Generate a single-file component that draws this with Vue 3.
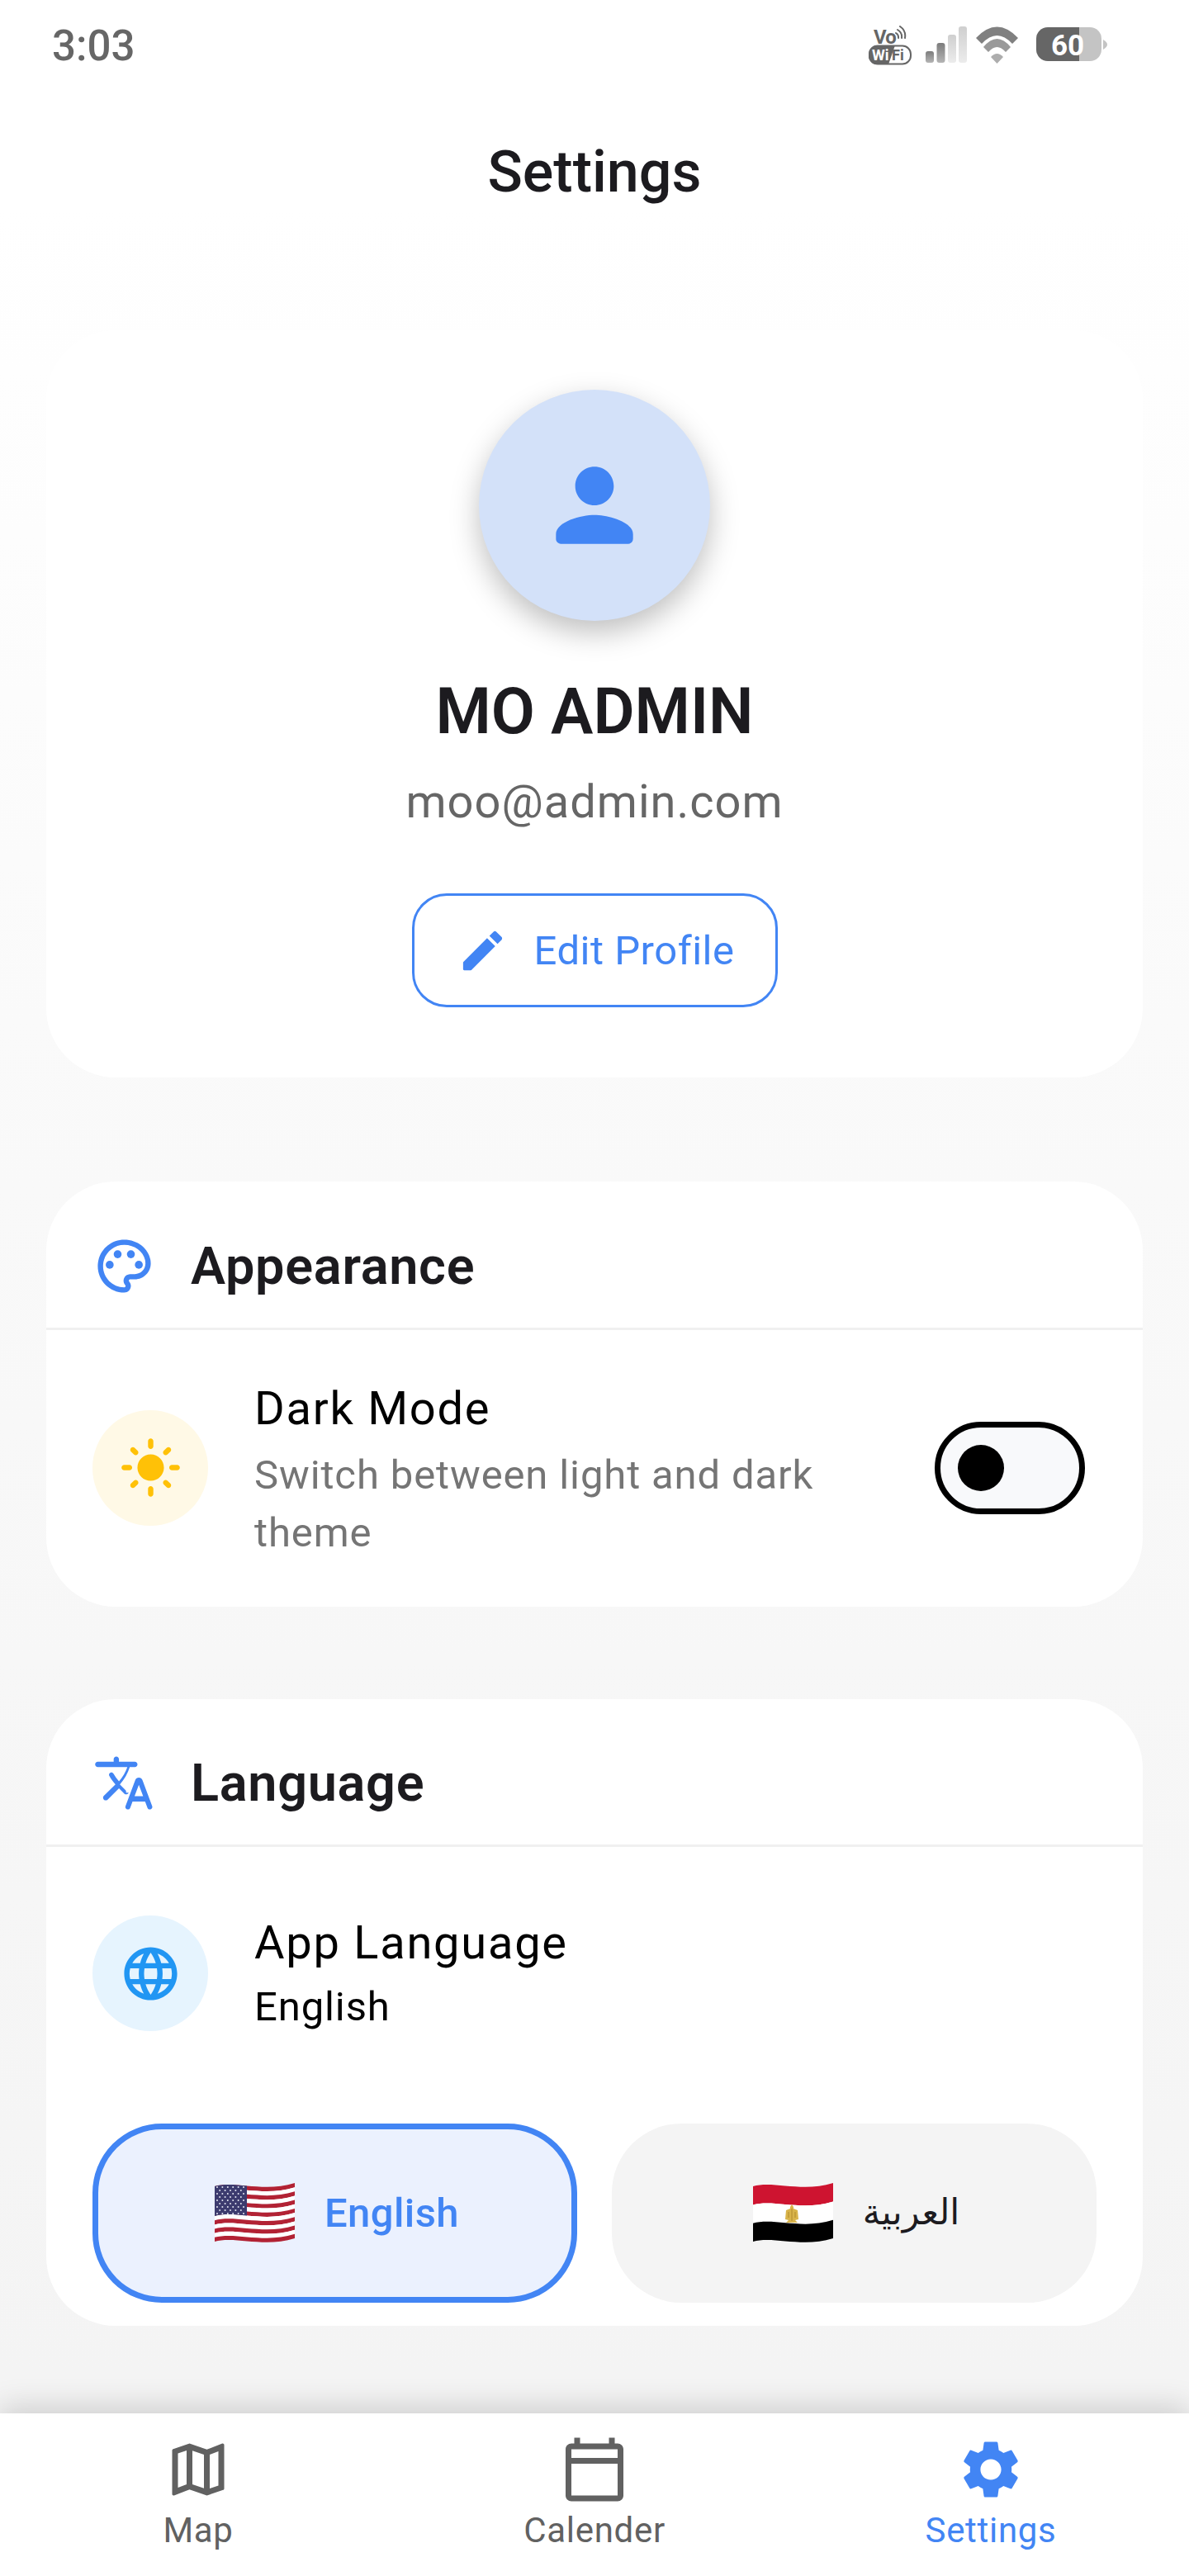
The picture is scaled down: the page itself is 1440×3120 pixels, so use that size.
<script setup>
// wavy band used by both flags, top edge y0 and bottom edge y1
const band = (y0, y1) =>
  `M0 ${y0 + 4}C25 ${y0 - 3} 60 ${y0 + 12} 97 ${y0}V${y1}C60 ${y1 + 12} 25 ${y1 - 3} 0 ${y1 + 4}Z`;

const stripeH = 67 / 13;
const usStripes = Array.from({ length: 13 }, (_, i) => ({
  d: band(i * stripeH, (i + 1) * stripeH),
  fill: i % 2 === 0 ? "#b22234" : "#ffffff",
}));

const stars = [];
for (let r = 0; r < 9; r++) {
  const n = r % 2 === 0 ? 6 : 5;
  for (let c = 0; c < n; c++) {
    stars.push({ x: (r % 2 === 0 ? 3 : 6.2) + c * 6.4, y: 5 + r * 4 });
  }
}

const egStripes = [
  { d: band(0, 22.4), fill: "#ce1430" },
  { d: band(22.4, 44.8), fill: "#ffffff" },
  { d: band(44.8, 67), fill: "#000000" },
];
const usCanton = band(0, 36);
</script>

<template>
  <div class="page">
    <!-- status bar -->
    <div class="status">
      <span class="time">3:03</span>
      <div class="status-icons">
        <svg class="vowifi" width="52" height="48" viewBox="0 0 52 48">
          <text x="6" y="22" class="vo">Vo</text>
          <path d="M33 9a6 6 0 0 1 3 6M35 5a10 10 0 0 1 5 10M38 1a14 14 0 0 1 6 14" fill="none" stroke="#666" stroke-width="2" stroke-linecap="round" />
          <rect x="1" y="24.5" width="50" height="22" rx="10" fill="#fff" stroke="#666" stroke-width="2" />
          <path d="M10 24H32L24 47H10A10 10 0 0 1 0 36V34A10 10 0 0 1 10 24Z" fill="#666" />
          <text x="4" y="42" class="wi">Wi</text>
          <text x="28" y="42" class="fi">Fi</text>
        </svg>
        <svg width="50" height="48" viewBox="0 0 50 48">
          <defs>
            <linearGradient id="barDark" x1="0" y1="0" x2="0" y2="1">
              <stop offset="0" stop-color="#7c7c7c" />
              <stop offset="1" stop-color="#b4b4b4" />
            </linearGradient>
            <linearGradient id="barLight" x1="0" y1="0" x2="0" y2="1">
              <stop offset="0" stop-color="#cfcfcf" />
              <stop offset="1" stop-color="#ececec" />
            </linearGradient>
          </defs>
          <rect x="0" y="31" width="10" height="14" rx="3" fill="url(#barDark)" />
          <rect x="13.500" y="21" width="10" height="24" rx="3" fill="url(#barDark)" />
          <rect x="27" y="11" width="10" height="34" rx="3" fill="url(#barLight)" />
          <rect x="40" y="1" width="10" height="44" rx="3" fill="url(#barLight)" />
        </svg>
        <svg width="51" height="48" viewBox="0 0 51 48">
          <path d="M0 15Q25.500 -12 51 15L44 22Q25.500 2 7 22Z" fill="#808080" />
          <path d="M9 26Q25.500 6 42 26L36 32Q25.500 20 15 32Z" fill="#999" />
          <path d="M18 38Q25.500 30 33 38L25.500 46Z" fill="#adadad" />
        </svg>
        <svg width="86" height="48" viewBox="0 0 86 48">
          <path d="M14 2H52V43H14A14 14 0 0 1 0 29V16A14 14 0 0 1 14 2Z" fill="#666" />
          <path d="M52 2H65A14 14 0 0 1 79 16V29A14 14 0 0 1 65 43H52Z" fill="#c4c4c4" />
          <path d="M81 17Q86 20 86 23Q86 26 81 29Z" fill="#c4c4c4" />
          <text x="18" y="36" class="batt">60</text>
        </svg>
      </div>
    </div>

    <div class="appbar">Settings</div>

    <div class="content">
      <!-- profile -->
      <section class="card profile">
        <div class="avatar">
          <svg width="140" height="140" viewBox="0 0 24 24" fill="#4285f4">
            <path d="M12 12c2.210 0 4-1.790 4-4s-1.790-4-4-4-4 1.790-4 4 1.790 4 4 4zm0 2c-2.670 0-8 1.340-8 4v1c0 .55.45 1 1 1h14c.55 0 1-.45 1-1v-1c0-2.660-5.330-4-8-4z" />
          </svg>
        </div>
        <div class="name">MO ADMIN</div>
        <div class="email">moo@admin.com</div>
        <button class="edit-btn">
          <svg width="63" height="63" viewBox="0 0 24 24" fill="#4285f4">
            <path d="M3 17.460v3.040c0 .28.22.5.5.5h3.040c.13 0 .26-.05.35-.15L17.810 9.940l-3.750-3.750L3.150 17.100c-.1.1-.15.22-.15.36zM20.710 7.040c.39-.39.39-1.020 0-1.410l-2.340-2.340c-.39-.39-1.020-.39-1.410 0l-1.830 1.830 3.750 3.750 1.830-1.830z" />
          </svg>
          <span>Edit Profile</span>
        </button>
      </section>

      <!-- appearance -->
      <section class="card appearance">
        <div class="card-head">
          <svg width="77" height="77" viewBox="0 0 24 24" fill="#4285f4">
            <path d="M12 22C6.490 22 2 17.510 2 12S6.490 2 12 2s10 4.040 10 9c0 3.310-2.690 6-6 6h-1.770c-.28 0-.5.22-.5.5 0 .12.05.23.13.33.41.47.64 1.060.64 1.670 0 1.380-1.120 2.500-2.500 2.500zm0-18c-4.410 0-8 3.590-8 8s3.590 8 8 8c.28 0 .5-.22.5-.5 0-.16-.08-.28-.14-.35-.41-.46-.63-1.050-.63-1.650 0-1.380 1.120-2.500 2.500-2.500H16c2.210 0 4-1.790 4-4 0-3.860-3.590-7-8-7z" />
            <circle cx="6.500" cy="11.500" r="1.500" />
            <circle cx="9.500" cy="7.500" r="1.500" />
            <circle cx="14.500" cy="7.500" r="1.500" />
            <circle cx="17.500" cy="11.500" r="1.500" />
          </svg>
          <h2>Appearance</h2>
        </div>
        <div class="row dark-row">
          <div class="round-icon sun">
            <svg width="77" height="77" viewBox="0 0 24 24" fill="#ffc107">
              <path d="M12 7c-2.760 0-5 2.240-5 5s2.240 5 5 5 5-2.240 5-5-2.240-5-5-5zM2 13h2c.55 0 1-.45 1-1s-.45-1-1-1H2c-.55 0-1 .45-1 1s.45 1 1 1zm18 0h2c.55 0 1-.45 1-1s-.45-1-1-1h-2c-.55 0-1 .45-1 1s.45 1 1 1zM11 2v2c0 .55.45 1 1 1s1-.45 1-1V2c0-.55-.45-1-1-1s-1 .45-1 1zm0 18v2c0 .55.45 1 1 1s1-.45 1-1v-2c0-.55-.45-1-1-1s-1 .45-1 1zM5.990 4.580c-.39-.39-1.030-.39-1.410 0-.39.39-.39 1.030 0 1.410l1.060 1.060c.39.39 1.030.39 1.410 0s.39-1.030 0-1.410L5.990 4.580zm12.370 12.370c-.39-.39-1.030-.39-1.410 0-.39.39-.39 1.030 0 1.410l1.060 1.060c.39.39 1.030.39 1.410 0 .39-.39.39-1.030 0-1.410l-1.060-1.060zm1.060-10.960c.39-.39.39-1.030 0-1.410-.39-.39-1.030-.39-1.410 0l-1.060 1.060c-.39.39-.39 1.030 0 1.410s1.030.39 1.410 0l1.060-1.060zM7.050 18.360c.39-.39.39-1.030 0-1.410-.39-.39-1.030-.39-1.410 0l-1.060 1.060c-.39.39-.39 1.030 0 1.410s1.030.39 1.410 0l1.060-1.060z" />
            </svg>
          </div>
          <div class="row-text">
            <div class="row-title">Dark Mode</div>
            <div class="row-sub">Switch between light and dark theme</div>
          </div>
          <div class="switch"><span class="thumb"></span></div>
        </div>
      </section>

      <!-- language -->
      <section class="card language">
        <div class="card-head">
          <svg width="77" height="77" viewBox="0 0 24 24" fill="#4285f4">
            <path d="M12.650 15.670c.14-.36.05-.77-.23-1.050l-2.090-2.060.03-.03c1.740-1.940 2.980-4.170 3.710-6.530H16c.54 0 .99-.45.99-.99v-.02c0-.54-.45-.99-.99-.99h-6V3c0-.55-.45-1-1-1s-1 .45-1 1v1H2c-.55 0-1 .45-1 1s.45 1 1 1h11.170C12.500 7.920 11.440 9.750 10 11.350c-.81-.89-1.490-1.860-2.060-2.880-.16-.29-.45-.47-.78-.47-.69 0-1.130.75-.79 1.350.63 1.130 1.400 2.210 2.300 3.210L4.300 16.870c-.4.39-.4 1.030 0 1.420.39.39 1.020.39 1.420 0L10 14l2.020 2.020c.51.51 1.380.32 1.630-.35zM17.500 10c-.6 0-1.140.37-1.350.94l-3.670 9.800c-.24.61.22 1.260.87 1.260.39 0 .74-.24.88-.61l.89-2.390h4.750l.9 2.390c.14.36.49.61.88.61.65 0 1.110-.65.88-1.260l-3.670-9.800c-.22-.57-.76-.94-1.360-.94zm-1.620 7l1.620-4.330L19.120 17h-3.240z" />
          </svg>
          <h2>Language</h2>
        </div>
        <div class="row lang-row">
          <div class="round-icon globe">
            <svg width="77" height="77" viewBox="0 0 24 24" fill="#2196f3">
              <path d="M11.990 2C6.470 2 2 6.480 2 12s4.470 10 9.990 10C17.520 22 22 17.520 22 12S17.520 2 11.990 2zm6.930 6h-2.950c-.32-1.250-.78-2.450-1.380-3.560 1.840.63 3.370 1.910 4.330 3.560zM12 4.040c.83 1.200 1.480 2.530 1.910 3.960h-3.820c.43-1.430 1.080-2.760 1.910-3.960zM4.260 14C4.100 13.360 4 12.690 4 12s.1-1.360.26-2h3.380c-.08.66-.14 1.320-.14 2 0 .68.06 1.340.14 2H4.260zm.82 2h2.950c.32 1.250.78 2.450 1.380 3.560-1.840-.63-3.370-1.900-4.330-3.560zm2.950-8H5.080c.96-1.660 2.490-2.930 4.330-3.560C8.810 5.550 8.350 6.750 8.030 8zM12 19.960c-.83-1.200-1.480-2.530-1.910-3.960h3.820c-.43 1.430-1.080 2.760-1.910 3.960zM14.340 14H9.660c-.09-.66-.16-1.320-.16-2 0-.68.07-1.350.16-2h4.680c.09.65.16 1.320.16 2 0 .68-.07 1.340-.16 2zm.25 5.560c.6-1.110 1.060-2.310 1.380-3.560h2.950c-.96 1.650-2.490 2.930-4.330 3.560zM16.360 14c.08-.66.14-1.320.14-2 0-.68-.06-1.340-.14-2h3.380c.16.64.26 1.310.26 2s-.1 1.360-.26 2h-3.380z" />
            </svg>
          </div>
          <div class="row-text">
            <div class="row-title">App Language</div>
            <div class="row-value">English</div>
          </div>
        </div>
        <div class="lang-buttons">
          <button class="lang-btn active">
            <svg class="flag" width="97" height="73" viewBox="0 0 97 73">
              <defs>
                <clipPath id="cantonClip"><rect x="0" y="-4" width="39" height="60" /></clipPath>
              </defs>
              <path v-for="(s, i) in usStripes" :key="i" :d="s.d" :fill="s.fill" />
              <g clip-path="url(#cantonClip)">
                <path :d="usCanton" fill="#3c3b6e" />
                <circle v-for="(st, i) in stars" :key="i" :cx="st.x" :cy="st.y" r="1" fill="#e4e6f2" />
              </g>
            </svg>
            <span>English</span>
          </button>
          <button class="lang-btn">
            <svg class="flag" width="97" height="73" viewBox="0 0 97 73">
              <path v-for="(s, i) in egStripes" :key="i" :d="s.d" :fill="s.fill" />
              <path d="M47 26L49 29V31L54 33L55 44L51 45L54 48H40L43 45L39 44L40 33L45 31V29Z" fill="#d9b44a" />
              <path d="M47 31V46M43 35V42M51 35V42" stroke="#b08a2c" stroke-width="1" fill="none" />
            </svg>
            <span class="arabic">العربية</span>
          </button>
        </div>
      </section>
    </div>

    <!-- bottom navigation -->
    <nav class="bottom-nav">
      <div class="nav-item">
        <svg width="84" height="84" viewBox="0 0 24 24" fill="#616161">
          <path d="M20.500 3l-.16.03L15 5.100 9 3 3.360 4.900c-.21.07-.36.25-.36.48V20.500c0 .28.22.5.5.5l.16-.03L9 18.900l6 2.100 5.640-1.900c.21-.07.36-.25.36-.48V3.500c0-.28-.22-.5-.5-.5zM10 5.470l4 1.400v11.660l-4-1.400V5.470zm-5 .99l3-1.010v11.700l-3 1.160V6.460zm14 11.080l-3 1.010V6.860l3-1.160v11.840z" />
        </svg>
        <span>Map</span>
      </div>
      <div class="nav-item">
        <svg width="84" height="84" viewBox="0 0 24 24" fill="#616161">
          <path d="M20 3h-1V1h-2v2H7V1H5v2H4c-1.100 0-2 .9-2 2v16c0 1.100.9 2 2 2h16c1.100 0 2-.9 2-2V5c0-1.100-.9-2-2-2zm0 2v3H4V5h16zM4 21V10h16v11H4z" />
        </svg>
        <span>Calender</span>
      </div>
      <div class="nav-item current">
        <svg width="84" height="84" viewBox="0 0 24 24" fill="#4285f4">
          <path d="M19.140 12.940c.04-.3.06-.61.06-.94 0-.32-.02-.64-.07-.94l2.030-1.580c.18-.14.23-.41.12-.61l-1.920-3.320c-.12-.22-.37-.29-.59-.22l-2.390.96c-.5-.38-1.030-.7-1.620-.94l-.36-2.540c-.04-.24-.24-.41-.48-.41h-3.840c-.24 0-.43.17-.47.41l-.36 2.540c-.59.24-1.130.57-1.620.94l-2.390-.96c-.22-.08-.47 0-.59.22L2.740 8.870c-.12.21-.08.47.12.61l2.030 1.580c-.05.3-.09.63-.09.94s.02.64.07.94l-2.030 1.580c-.18.14-.23.41-.12.61l1.920 3.320c.12.22.37.29.59.22l2.390-.96c.5.38 1.030.7 1.620.94l.36 2.540c.05.24.24.41.48.41h3.840c.24 0 .44-.17.47-.41l.36-2.540c.59-.24 1.130-.56 1.620-.94l2.390.96c.22.08.47 0 .59-.22l1.920-3.320c.12-.22.07-.47-.12-.61l-2.010-1.580zM12 15.600c-1.980 0-3.600-1.620-3.600-3.600s1.620-3.600 3.600-3.600 3.600 1.620 3.600 3.600-1.620 3.600-3.600 3.600z" />
        </svg>
        <span>Settings</span>
      </div>
    </nav>
  </div>
</template>

<style scoped>
.page {
  width: 1440px;
  height: 3120px;
  overflow: hidden;
  display: flex;
  flex-direction: column;
  font-family: "Roboto", sans-serif;
  background: linear-gradient(#ffffff 8%, #f9f9f9 46%, #f4f4f4 92%);
}

/* status bar */
.status {
  height: 112px;
  padding: 0 99px 2px 63px;
  box-sizing: border-box;
  display: flex;
  align-items: center;
  justify-content: space-between;
  flex-shrink: 0;
}
.time {
  font-size: 51px;
  font-weight: 500;
  color: #666;
}
.status-icons {
  display: flex;
  align-items: center;
}
.status-icons svg {
  display: block;
}
.status-icons svg:nth-child(1) { margin-right: 17px; }
.status-icons svg:nth-child(2) { margin-right: 11px; }
.status-icons svg:nth-child(3) { margin-right: 22px; }
.vo {
  font-size: 24px;
  font-weight: 700;
  letter-spacing: -1px;
  fill: #666;
}
.wi,
.fi {
  font-size: 18px;
  font-weight: 700;
}
.wi { fill: #fff; }
.fi { fill: #666; }
.batt {
  font-size: 35px;
  font-weight: 700;
  fill: #fff;
}

.appbar {
  height: 192px;
  flex-shrink: 0;
  display: flex;
  align-items: center;
  justify-content: center;
  font-size: 70px;
  font-weight: 500;
  color: #1c1b1f;
}

.content {
  flex: 1;
  padding: 96px 56px 0;
  display: flex;
  flex-direction: column;
}

.card {
  background: #fff;
  border-radius: 84px;
}

/* profile */
.profile {
  padding: 72px 0 85px;
  display: flex;
  flex-direction: column;
  align-items: center;
}
.avatar {
  width: 280px;
  height: 280px;
  border-radius: 50%;
  background: #d3e1f9;
  box-shadow: 0 14px 35px rgba(0, 0, 0, 0.25);
  display: flex;
  align-items: center;
  justify-content: center;
}
.name {
  margin-top: 55px;
  font-size: 77px;
  line-height: 110px;
  font-weight: 600;
  color: #1c1b1f;
}
.email {
  margin-top: 12px;
  font-size: 56px;
  line-height: 84px;
  letter-spacing: 1px;
  color: #666;
}
.edit-btn {
  margin-top: 69px;
  width: 443px;
  height: 138px;
  box-sizing: border-box;
  border: 3.5px solid #4285f4;
  border-radius: 42px;
  background: #fff;
  display: flex;
  align-items: center;
  justify-content: center;
  gap: 31px;
  padding: 0 0 0 2px;
  font-family: inherit;
  font-size: 49px;
  font-weight: 400;
  letter-spacing: 0.5px;
  color: #4285f4;
}

/* section cards */
.appearance {
  margin-top: 126px;
}
.language {
  margin-top: 112px;
  padding-bottom: 28px;
}
.card-head {
  height: 179.5px;
  box-sizing: border-box;
  padding: 28px 56px 0;
  display: flex;
  align-items: center;
  gap: 42px;
  border-bottom: 3.5px solid #f0f0f0;
}
.card-head h2 {
  margin: 0;
  font-size: 63px;
  font-weight: 600;
  letter-spacing: 0.7px;
  color: #1c1b1f;
}

.row {
  display: flex;
  align-items: center;
}
.dark-row {
  padding: 53px 70px 54px 56px;
}
.lang-row {
  padding: 74px 56px 0;
}
.lang-row .round-icon {
  margin-top: 3px;
}
.round-icon {
  width: 140px;
  height: 140px;
  border-radius: 50%;
  flex-shrink: 0;
  display: flex;
  align-items: center;
  justify-content: center;
}
.sun { background: #fff9e6; }
.globe { background: #e6f4fe; }
.row-text {
  flex: 1;
  margin: 0 56px;
  min-width: 0;
}
.row-title {
  font-size: 56px;
  line-height: 84px;
  letter-spacing: 1.75px;
  color: #000;
}
.row-sub {
  margin-top: 4px;
  font-size: 49px;
  line-height: 70px;
  letter-spacing: 0.875px;
  color: #757575;
}
.row-value {
  margin-top: 1px;
  font-size: 49px;
  line-height: 70px;
  letter-spacing: 0.875px;
  color: #000;
}

.switch {
  width: 182px;
  height: 112px;
  box-sizing: border-box;
  flex-shrink: 0;
  border: 7px solid #000;
  border-radius: 56px;
  background: #f8f9fb;
  display: flex;
  align-items: center;
  padding-left: 21px;
}
.thumb {
  width: 56px;
  height: 56px;
  border-radius: 50%;
  background: #000;
}

.lang-buttons {
  margin-top: 106px;
  padding: 0 56px;
  display: grid;
  grid-template-columns: 1fr 1fr;
  gap: 42px;
}
.lang-btn {
  height: 217px;
  box-sizing: border-box;
  border: none;
  border-radius: 84px;
  background: #f4f4f4;
  display: flex;
  align-items: center;
  justify-content: center;
  gap: 36px;
  padding: 0 0 0 5px;
  font-family: inherit;
  font-size: 49px;
  color: #1c1b1f;
}
.lang-btn.active {
  border: 7px solid #4285f4;
  background: #ebf1fe;
  color: #4285f4;
  font-weight: 500;
  letter-spacing: 0.4px;
}
.arabic {
  font-family: "DejaVu Sans", "Noto Sans", sans-serif;
  font-size: 43px;
  margin-bottom: 4px;
}

/* bottom nav */
.bottom-nav {
  height: 197px;
  flex-shrink: 0;
  background: #fff;
  box-shadow: 0 -7px 35px rgba(0, 0, 0, 0.16);
  display: flex;
}
.nav-item {
  flex: 1;
  padding-top: 26px;
  display: flex;
  flex-direction: column;
  align-items: center;
  color: #616161;
  font-size: 42px;
  line-height: 56px;
  letter-spacing: 0.7px;
}
.nav-item span {
  margin-top: 4px;
}
.nav-item.current {
  color: #4285f4;
}
</style>
